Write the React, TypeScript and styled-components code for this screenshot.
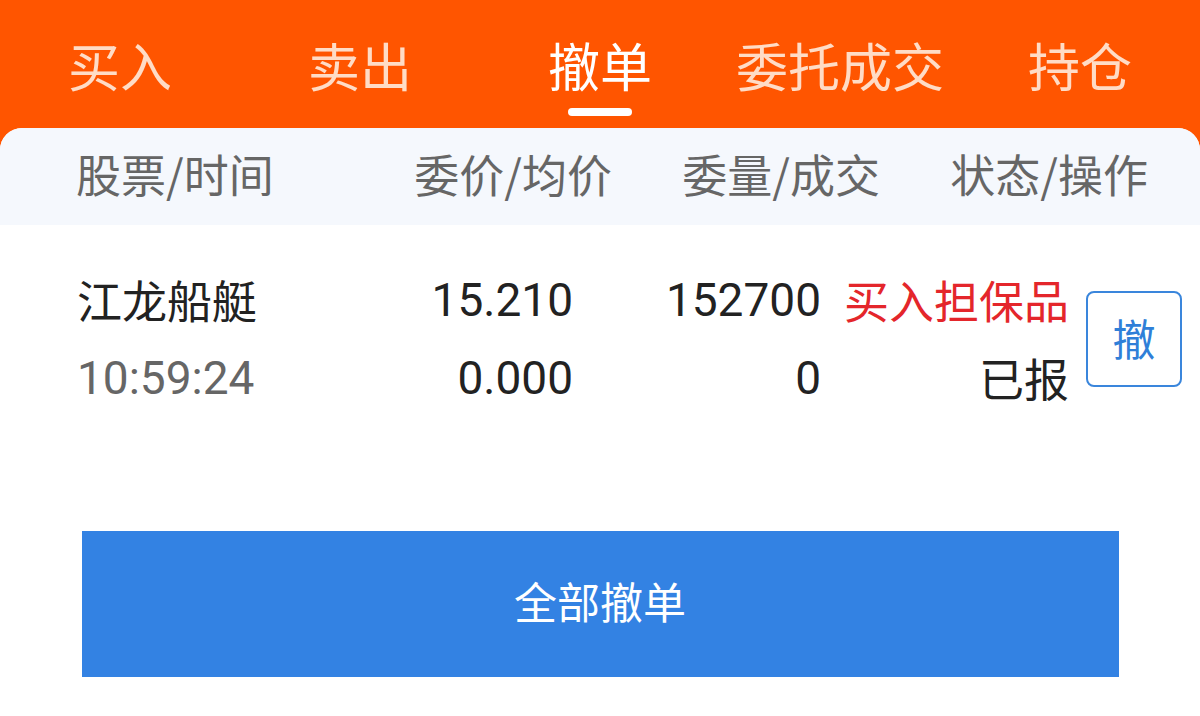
import React from 'react'
import styled, { createGlobalStyle } from 'styled-components'

const GlobalStyle = createGlobalStyle`
  html, body {
    margin: 0;
    padding: 0;
    background: #ffffff;
  }
  body {
    font-family: Roboto, "Noto Sans CJK SC", "Noto Sans", sans-serif;
  }
`

const Page = styled.div`
  width: 1200px;
  height: 716px;
  background: #ff5500;
  overflow: hidden;
`

const TabBar = styled.div`
  display: grid;
  grid-template-columns: repeat(5, 1fr);
  height: 128px;
`

const Tab = styled.div<{ $active?: boolean }>`
  display: flex;
  flex-direction: column;
  align-items: center;
  padding-top: 36px;
  font-size: 52px;
  line-height: 58px;
  color: ${({ $active }) => ($active ? '#ffffff' : '#ffdcc6')};
  font-family: "Noto Sans CJK SC", sans-serif;
`

const Underline = styled.span<{ $active?: boolean }>`
  margin-top: 14px;
  width: 64px;
  height: 8px;
  border-radius: 4px;
  background: ${({ $active }) => ($active ? '#ffffff' : 'transparent')};
`

const Panel = styled.div`
  background: #ffffff;
  border-radius: 22px 22px 0 0;
  overflow: hidden;
  height: 588px;
`

const HeadRow = styled.div`
  display: grid;
  grid-template-columns: repeat(4, 1fr);
  align-items: center;
  height: 91px;
  padding: 0 52px 6px 76px;
  background: #f5f8fd;
  font-family: "Noto Sans CJK SC", sans-serif;
  font-size: 45px;
  color: #666666;
`

const HeadCell = styled.div<{ $left?: boolean }>`
  text-align: ${({ $left }) => ($left ? 'left' : 'right')};
`

const OrderRow = styled.div`
  display: grid;
  grid-template-columns: repeat(4, 248px) 96px;
  align-items: center;
  padding: 36px 0 0 77px;
`

const Cell = styled.div<{ $left?: boolean }>`
  display: flex;
  flex-direction: column;
  align-items: ${({ $left }) => ($left ? 'flex-start' : 'flex-end')};
`

const Line = styled.span<{ $color?: string; $cjk?: boolean }>`
  font-size: ${({ $cjk }) => ($cjk ? '45px' : '46px')};
  line-height: 78px;
  white-space: nowrap;
  color: ${({ $color }) => $color || '#222222'};
  font-family: ${({ $cjk }) =>
    $cjk ? '"Noto Sans CJK SC", sans-serif' : 'Roboto, "Noto Sans CJK SC", sans-serif'};
`

const CancelButton = styled.button`
  margin-left: 17px;
  width: 96px;
  height: 96px;
  box-sizing: border-box;
  border: 2px solid #3a86dc;
  border-radius: 8px;
  background: #ffffff;
  color: #2f7fd8;
  font-family: "Noto Sans CJK SC", sans-serif;
  font-size: 43px;
  padding: 0 0 4px;
`

const CancelAll = styled.button`
  display: block;
  margin: 114px auto 0;
  width: 1037px;
  height: 146px;
  border: none;
  padding: 0 0 8px;
  background: #3382e3;
  color: #ffffff;
  font-family: "Noto Sans CJK SC", sans-serif;
  font-size: 43px;
`

const tabs = ['买入', '卖出', '撤单', '委托成交', '持仓']

export default function App() {
  return (
    <Page>
      <GlobalStyle />
      <TabBar>
        {tabs.map((t) => (
          <Tab key={t} $active={t === '撤单'}>
            {t}
            <Underline $active={t === '撤单'} />
          </Tab>
        ))}
      </TabBar>
      <Panel>
        <HeadRow>
          <HeadCell $left>股票/时间</HeadCell>
          <HeadCell>委价/均价</HeadCell>
          <HeadCell>委量/成交</HeadCell>
          <HeadCell>状态/操作</HeadCell>
        </HeadRow>
        <OrderRow>
          <Cell $left>
            <Line $cjk>江龙船艇</Line>
            <Line $color="#666666">10:59:24</Line>
          </Cell>
          <Cell>
            <Line>15.210</Line>
            <Line>0.000</Line>
          </Cell>
          <Cell>
            <Line>152700</Line>
            <Line>0</Line>
          </Cell>
          <Cell>
            <Line $cjk $color="#e4262b">买入担保品</Line>
            <Line $cjk>已报</Line>
          </Cell>
          <CancelButton>撤</CancelButton>
        </OrderRow>
        <CancelAll>全部撤单</CancelAll>
      </Panel>
    </Page>
  )
}
